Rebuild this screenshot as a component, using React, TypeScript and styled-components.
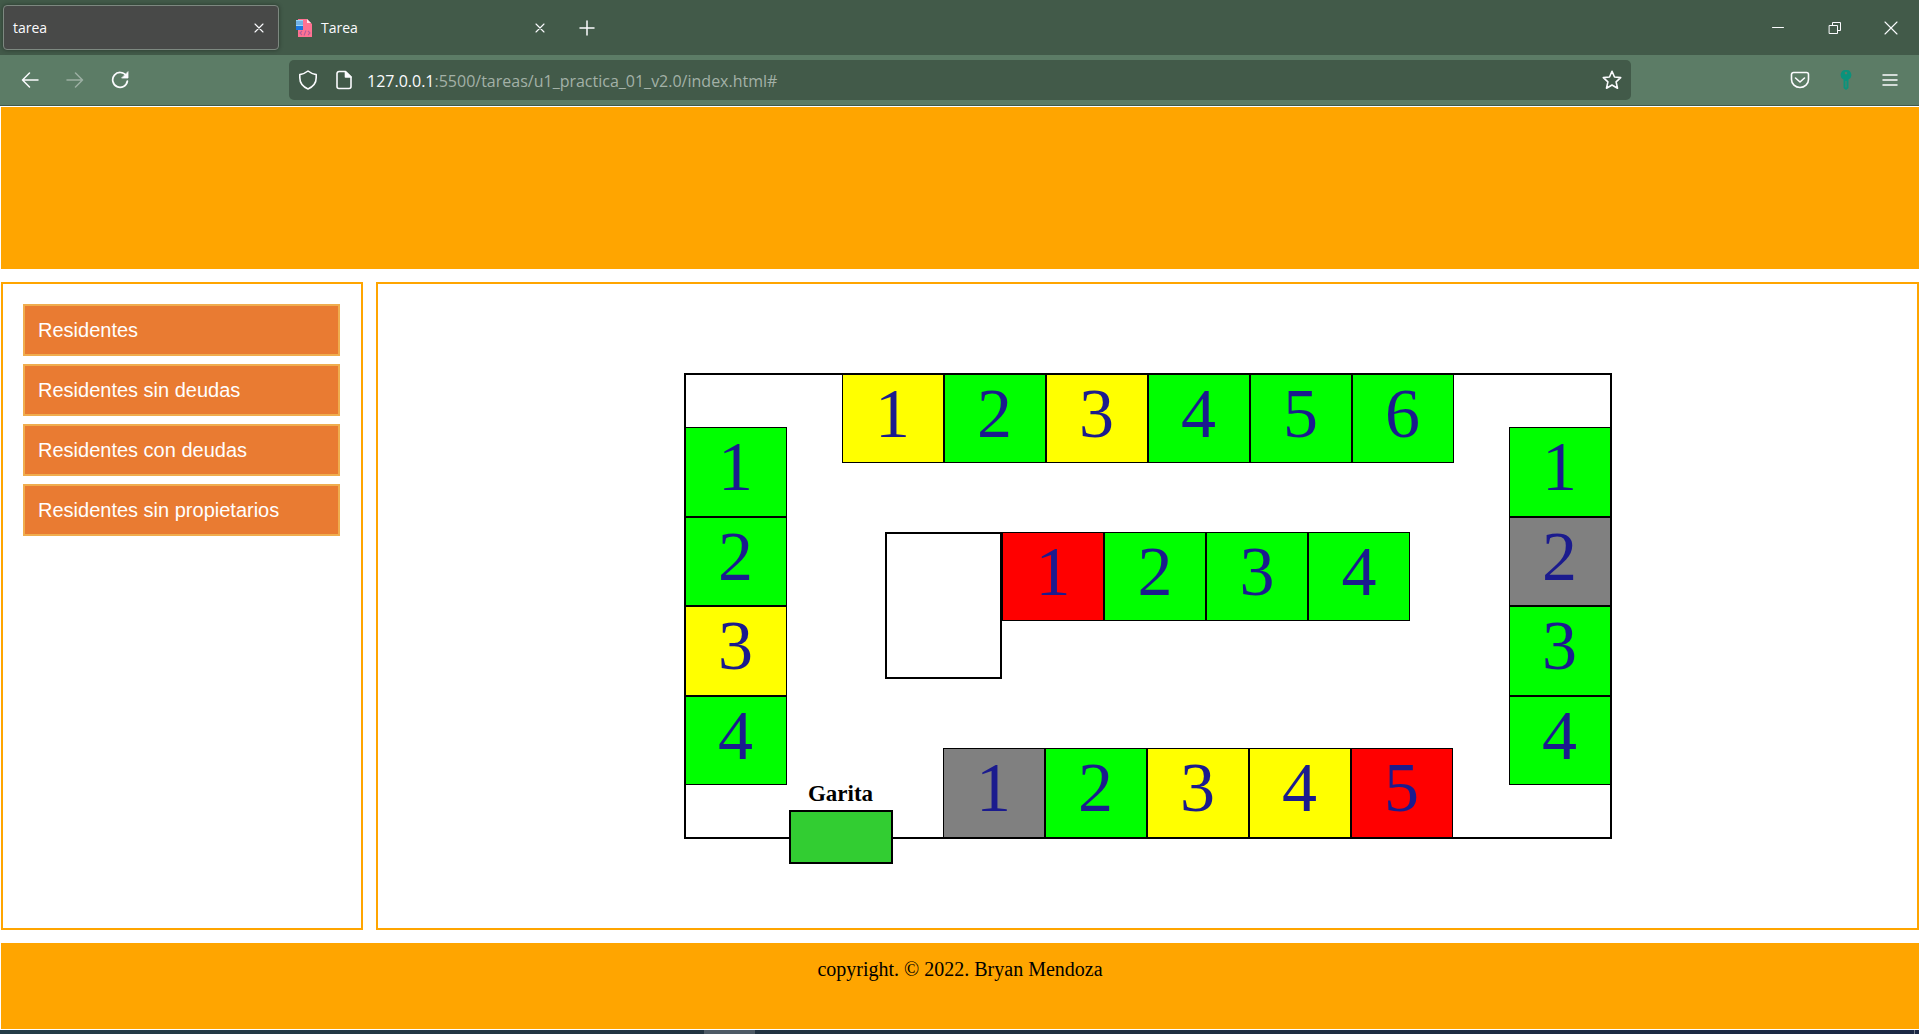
import React from 'react';
import styled, { createGlobalStyle } from 'styled-components';

type Status = 'paid' | 'pending' | 'overdue' | 'vacant';

const statusColor: Record<Status, string> = {
  paid: '#00ff00',
  pending: '#ffff00',
  overdue: '#ff0000',
  vacant: '#808080',
};

const GlobalStyle = createGlobalStyle`
  * { box-sizing: border-box; }
  body { margin: 0; background: #fff; }
`;

const uiFont = '"Open Sans", "Noto Sans", sans-serif';
const serif = '"Liberation Serif", "Times New Roman", serif';

const Screen = styled.div`
  display: flex;
  flex-direction: column;
  min-height: 100vh;
`;

const TabBar = styled.div`
  display: flex;
  align-items: center;
  height: 55px;
  padding-left: 3px;
  background: #425a49;
  color: #fbfbfe;
  font-family: ${uiFont};
`;

const Tab = styled.div<{ $active?: boolean }>`
  display: flex;
  align-items: center;
  gap: 9px;
  width: 276px;
  height: 45px;
  margin-right: 5px;
  padding: 0 7px 0 9px;
  border: 1px solid ${(p) => (p.$active ? '#7d8880' : 'transparent')};
  border-radius: 4px;
  background: ${(p) => (p.$active ? '#484948' : 'transparent')};
  box-shadow: ${(p) => (p.$active ? '0 0 4px rgba(0, 0, 0, 0.4)' : 'none')};
`;

const TabTitle = styled.span`
  flex: 1;
  font-size: 14px;
  line-height: 20px;
`;

const IconButton = styled.button<{ $width: number; $dim?: boolean }>`
  display: flex;
  align-items: center;
  justify-content: center;
  width: ${(p) => p.$width}px;
  height: 40px;
  padding: 0;
  border: 0;
  background: none;
  color: #fbfbfe;
  opacity: ${(p) => (p.$dim ? 0.4 : 1)};
`;

const WindowControls = styled.div`
  display: flex;
  margin-left: auto;
`;

const Toolbar = styled.div`
  display: flex;
  align-items: center;
  height: 51px;
  padding: 0 7px 1px 8px;
  border-bottom: 1px solid #425a49;
  background: #5c7c66;
`;

const NavGroup = styled.div`
  display: flex;
  flex: 0 0 281px;
`;

const AddressBar = styled.div`
  display: flex;
  align-items: center;
  flex: 0 1 1342px;
  height: 40px;
  border-radius: 5px;
  background: #425a49;
`;

const Address = styled.div`
  flex: 1;
  padding: 3px 0 0 6px;
  color: #a3b1a7;
  font-family: ${uiFont};
  font-size: 16px;
  line-height: 24px;
`;

const Host = styled.span`
  color: #fbfbfe;
`;

const ToolGroup = styled.div`
  display: flex;
  margin-left: auto;
`;

const Page = styled.div`
  display: flex;
  flex: 1;
  flex-direction: column;
  gap: 13px;
  padding: 1px 0 1px 1px;
`;

const Banner = styled.header`
  height: 162px;
  background: #ffa500;
`;

const Columns = styled.div`
  display: flex;
  flex: 1;
  gap: 13px;
`;

const Sidebar = styled.nav`
  display: flex;
  flex: 0 0 362px;
  flex-direction: column;
  gap: 8px;
  padding: 20px 21px 20px 20px;
  border: 2px solid #ffa500;
`;

const MenuButton = styled.button`
  height: 52px;
  padding: 0 13px;
  border: 2px solid #f0ad4e;
  background: #e97b32;
  color: #fff;
  font-family: "Liberation Sans", Arial, sans-serif;
  font-size: 20px;
  text-align: left;
`;

const Content = styled.main`
  display: flex;
  flex: 1;
  align-items: center;
  justify-content: center;
  border: 2px solid #ffa500;
`;

const Site = styled.section`
  position: relative;
  display: grid;
  grid-template-columns: 102px 1fr 102px;
  width: 926px;
  height: 464px;
  box-shadow: inset 0 0 0 1px #000, 0 0 0 1px #000;
`;

const Side = styled.div`
  display: flex;
  flex-direction: column;
  align-self: center;
  height: 358px;
`;

const Middle = styled.div`
  display: flex;
  flex-direction: column;
  align-items: center;
  justify-content: space-between;
`;

const Row = styled.div`
  display: flex;
`;

const EntranceRow = styled(Row)`
  align-self: flex-end;
  height: 90px;
  margin-right: 56px;
`;

const Block = styled.div`
  display: flex;
  align-items: flex-start;
`;

const Lot = styled.a<{ $status: Status }>`
  flex: 1 0 89px;
  width: 102px;
  min-width: 102px;
  min-height: 89px;
  border: 1px solid #000;
  background: ${(p) => statusColor[p.$status]};
  color: #1b1b8e;
  font-family: ${serif};
  font-size: 70px;
  line-height: 78px;
  text-align: center;
  text-decoration: none;
`;

const CommonArea = styled.div`
  width: 117px;
  height: 147px;
  border: 2px solid #000;
`;

const Gate = styled.div`
  position: absolute;
  left: 104px;
  bottom: -26px;
  width: 104px;
  color: #000;
  font-family: ${serif};
  font-size: 23px;
  font-weight: bold;
  line-height: 32px;
  text-align: center;
`;

const GateHouse = styled.div`
  height: 54px;
  border: 2px solid #000;
  background: #32cd32;
`;

const Footer = styled.footer`
  height: 86px;
  padding-top: 14px;
  background: #ffa500;
  color: #000;
  font-family: ${serif};
  font-size: 20px;
  line-height: 24px;
  text-align: center;
`;

const Taskbar = styled.div`
  display: flex;
  height: 4px;
  background: linear-gradient(90deg, #243c47, #20303f 50%, #1a2744);
`;

const TaskbarActive = styled.div`
  width: 51px;
  margin-left: 704px;
  background: #4d5a66;
`;

const TaskbarEdge = styled.div`
  width: 1px;
  margin-left: auto;
  margin-right: 4px;
  background: #747c8c;
`;

const Svg = ({ size, w = 1.5, children }: { size: number; w?: number; children: React.ReactNode }) => (
  <svg
    width={size}
    height={size}
    viewBox={`0 0 ${size} ${size}`}
    fill="none"
    stroke="currentColor"
    strokeWidth={w}
    strokeLinecap="round"
    strokeLinejoin="round"
    aria-hidden="true"
  >
    {children}
  </svg>
);

const CloseIcon = () => (
  <Svg size={10} w={1.1}><path d="M1 1l8 8M9 1l-8 8" /></Svg>
);

const PageFavicon = () => (
  <svg width="18" height="20" viewBox="0 0 18 20" aria-hidden="true">
    <path d="M4 1h9l5 5v13H4z" fill="#ff7292" />
    <path d="M13 1l4 4h-4z" fill="#ffe3ec" />
    <path d="M2 2h7v6H2z" fill="#9bd8f8" />
    <path d="M2 4h7M2 6h7" stroke="#3278c8" strokeWidth="0.8" />
    <path d="M2 8h7v4H2z" fill="#1976e0" />
    <path d="M8 13l-2 2 2 2M14 13l2 2-2 2M12 12.500l-2 5" fill="none" stroke="#b35c9c" strokeWidth="1.1" />
  </svg>
);

const Lots = ({ items }: { items: Status[] }) => (
  <>
    {items.map((status, i) => (
      <Lot key={i} href="#" $status={status}>{i + 1}</Lot>
    ))}
  </>
);

const menu = ['Residentes', 'Residentes sin deudas', 'Residentes con deudas', 'Residentes sin propietarios'];

export default function App() {
  return (
    <Screen>
      <GlobalStyle />
      <TabBar>
        <Tab $active>
          <TabTitle>tarea</TabTitle>
          <IconButton $width={24} aria-label="Cerrar pestaña"><CloseIcon /></IconButton>
        </Tab>
        <Tab>
          <PageFavicon />
          <TabTitle>Tarea</TabTitle>
          <IconButton $width={24} aria-label="Cerrar pestaña"><CloseIcon /></IconButton>
        </Tab>
        <IconButton $width={44} aria-label="Nueva pestaña">
          <Svg size={16}><path d="M8 1v14M1 8h14" /></Svg>
        </IconButton>
        <WindowControls>
          <IconButton $width={56} aria-label="Minimizar">
            <Svg size={14} w={1}><path d="M1.500 6.500h11" /></Svg>
          </IconButton>
          <IconButton $width={57} aria-label="Restaurar">
            <Svg size={14} w={1}><path d="M1.500 4.500h8v8h-8zM4.500 4.500v-3h8v8h-3" /></Svg>
          </IconButton>
          <IconButton $width={56} aria-label="Cerrar">
            <Svg size={14} w={1.1}><path d="M1 1l12 12M13 1L1 13" /></Svg>
          </IconButton>
        </WindowControls>
      </TabBar>
      <Toolbar>
        <NavGroup>
          <IconButton $width={44} aria-label="Atrás">
            <Svg size={18}><path d="M17 9H1.500M8.500 2L1.500 9l7 7" /></Svg>
          </IconButton>
          <IconButton $width={45} $dim aria-label="Adelante">
            <Svg size={18}><path d="M1 9h15.500M9.500 2l7 7-7 7" /></Svg>
          </IconButton>
          <IconButton $width={45} aria-label="Recargar">
            <Svg size={18} w={1.7}>
              <path d="M15.200 4.700A7.400 7.400 0 1 0 16.400 10" />
              <path d="M17 1v6h-6z" fill="currentColor" strokeWidth="0.800" />
            </Svg>
          </IconButton>
        </NavGroup>
        <AddressBar>
          <IconButton $width={38} aria-label="Protección">
            <Svg size={20} w={1.6}>
              <path d="M10 1c2 1.600 5 3 8.200 3.600v3.200c0 5-3.200 9-8.200 11.200-5-2.200-8.200-6.200-8.200-11.200V4.600C5 4 8 2.600 10 1z" />
            </Svg>
          </IconButton>
          <IconButton $width={34} aria-label="Información del sitio">
            <Svg size={20} w={1.6}>
              <path d="M11 1.500H5a2 2 0 0 0-2 2v13a2 2 0 0 0 2 2h10a2 2 0 0 0 2-2V7z" />
              <path d="M11.500 1.500V7H17z" fill="currentColor" />
            </Svg>
          </IconButton>
          <Address><Host>127.0.0.1</Host>:5500/tareas/u1_practica_01_v2.0/index.html#</Address>
          <IconButton $width={38} aria-label="Marcador">
            <Svg size={20} w={1.6}>
              <path d="M10 1.300l2.500 5.700 6.200.6-4.600 4.200 1.400 6.400L10 15l-5.500 3.200 1.400-6.400L1.300 7.600l6.200-.6z" />
            </Svg>
          </IconButton>
        </AddressBar>
        <ToolGroup>
          <IconButton $width={46} aria-label="Pocket">
            <Svg size={20} w={1.6}>
              <path d="M3.500 2.500h13a2 2 0 0 1 2 2v5a8.500 8 0 0 1-17 0v-5a2 2 0 0 1 2-2z" />
              <path d="M5.500 8l4.500 4 4.500-4" />
            </Svg>
          </IconButton>
          <IconButton $width={45} aria-label="Contraseñas">
            <svg width="12" height="20" viewBox="0 0 12 20" aria-hidden="true">
              <path fillRule="evenodd" fill="#0a937c" d="M6 0a5 5 0 0 1 2.500 9.500V18L6 20l-2.500-2V9.500A5 5 0 0 1 6 0zM6 1.800a1.300 1.300 0 1 0 .01 0z" />
              <path d="M6 11v6.500" stroke="#5c7c66" />
            </svg>
          </IconButton>
          <IconButton $width={44} aria-label="Menú">
            <Svg size={16}><path d="M1 3h14M1 8h14M1 13h14" /></Svg>
          </IconButton>
        </ToolGroup>
      </Toolbar>
      <Page>
        <Banner />
        <Columns>
          <Sidebar>
            {menu.map((label) => <MenuButton key={label}>{label}</MenuButton>)}
          </Sidebar>
          <Content>
            <Site>
              <Side><Lots items={['paid', 'paid', 'pending', 'paid']} /></Side>
              <Middle>
                <Row><Lots items={['pending', 'paid', 'pending', 'paid', 'paid', 'paid']} /></Row>
                <Block>
                  <CommonArea />
                  <Row><Lots items={['overdue', 'paid', 'paid', 'paid']} /></Row>
                </Block>
                <EntranceRow><Lots items={['vacant', 'paid', 'pending', 'pending', 'overdue']} /></EntranceRow>
              </Middle>
              <Side><Lots items={['paid', 'vacant', 'paid', 'paid']} /></Side>
              <Gate>
                Garita
                <GateHouse />
              </Gate>
            </Site>
          </Content>
        </Columns>
        <Footer>copyright. © 2022. Bryan Mendoza</Footer>
      </Page>
      <Taskbar>
        <TaskbarActive />
        <TaskbarEdge />
      </Taskbar>
    </Screen>
  );
}
